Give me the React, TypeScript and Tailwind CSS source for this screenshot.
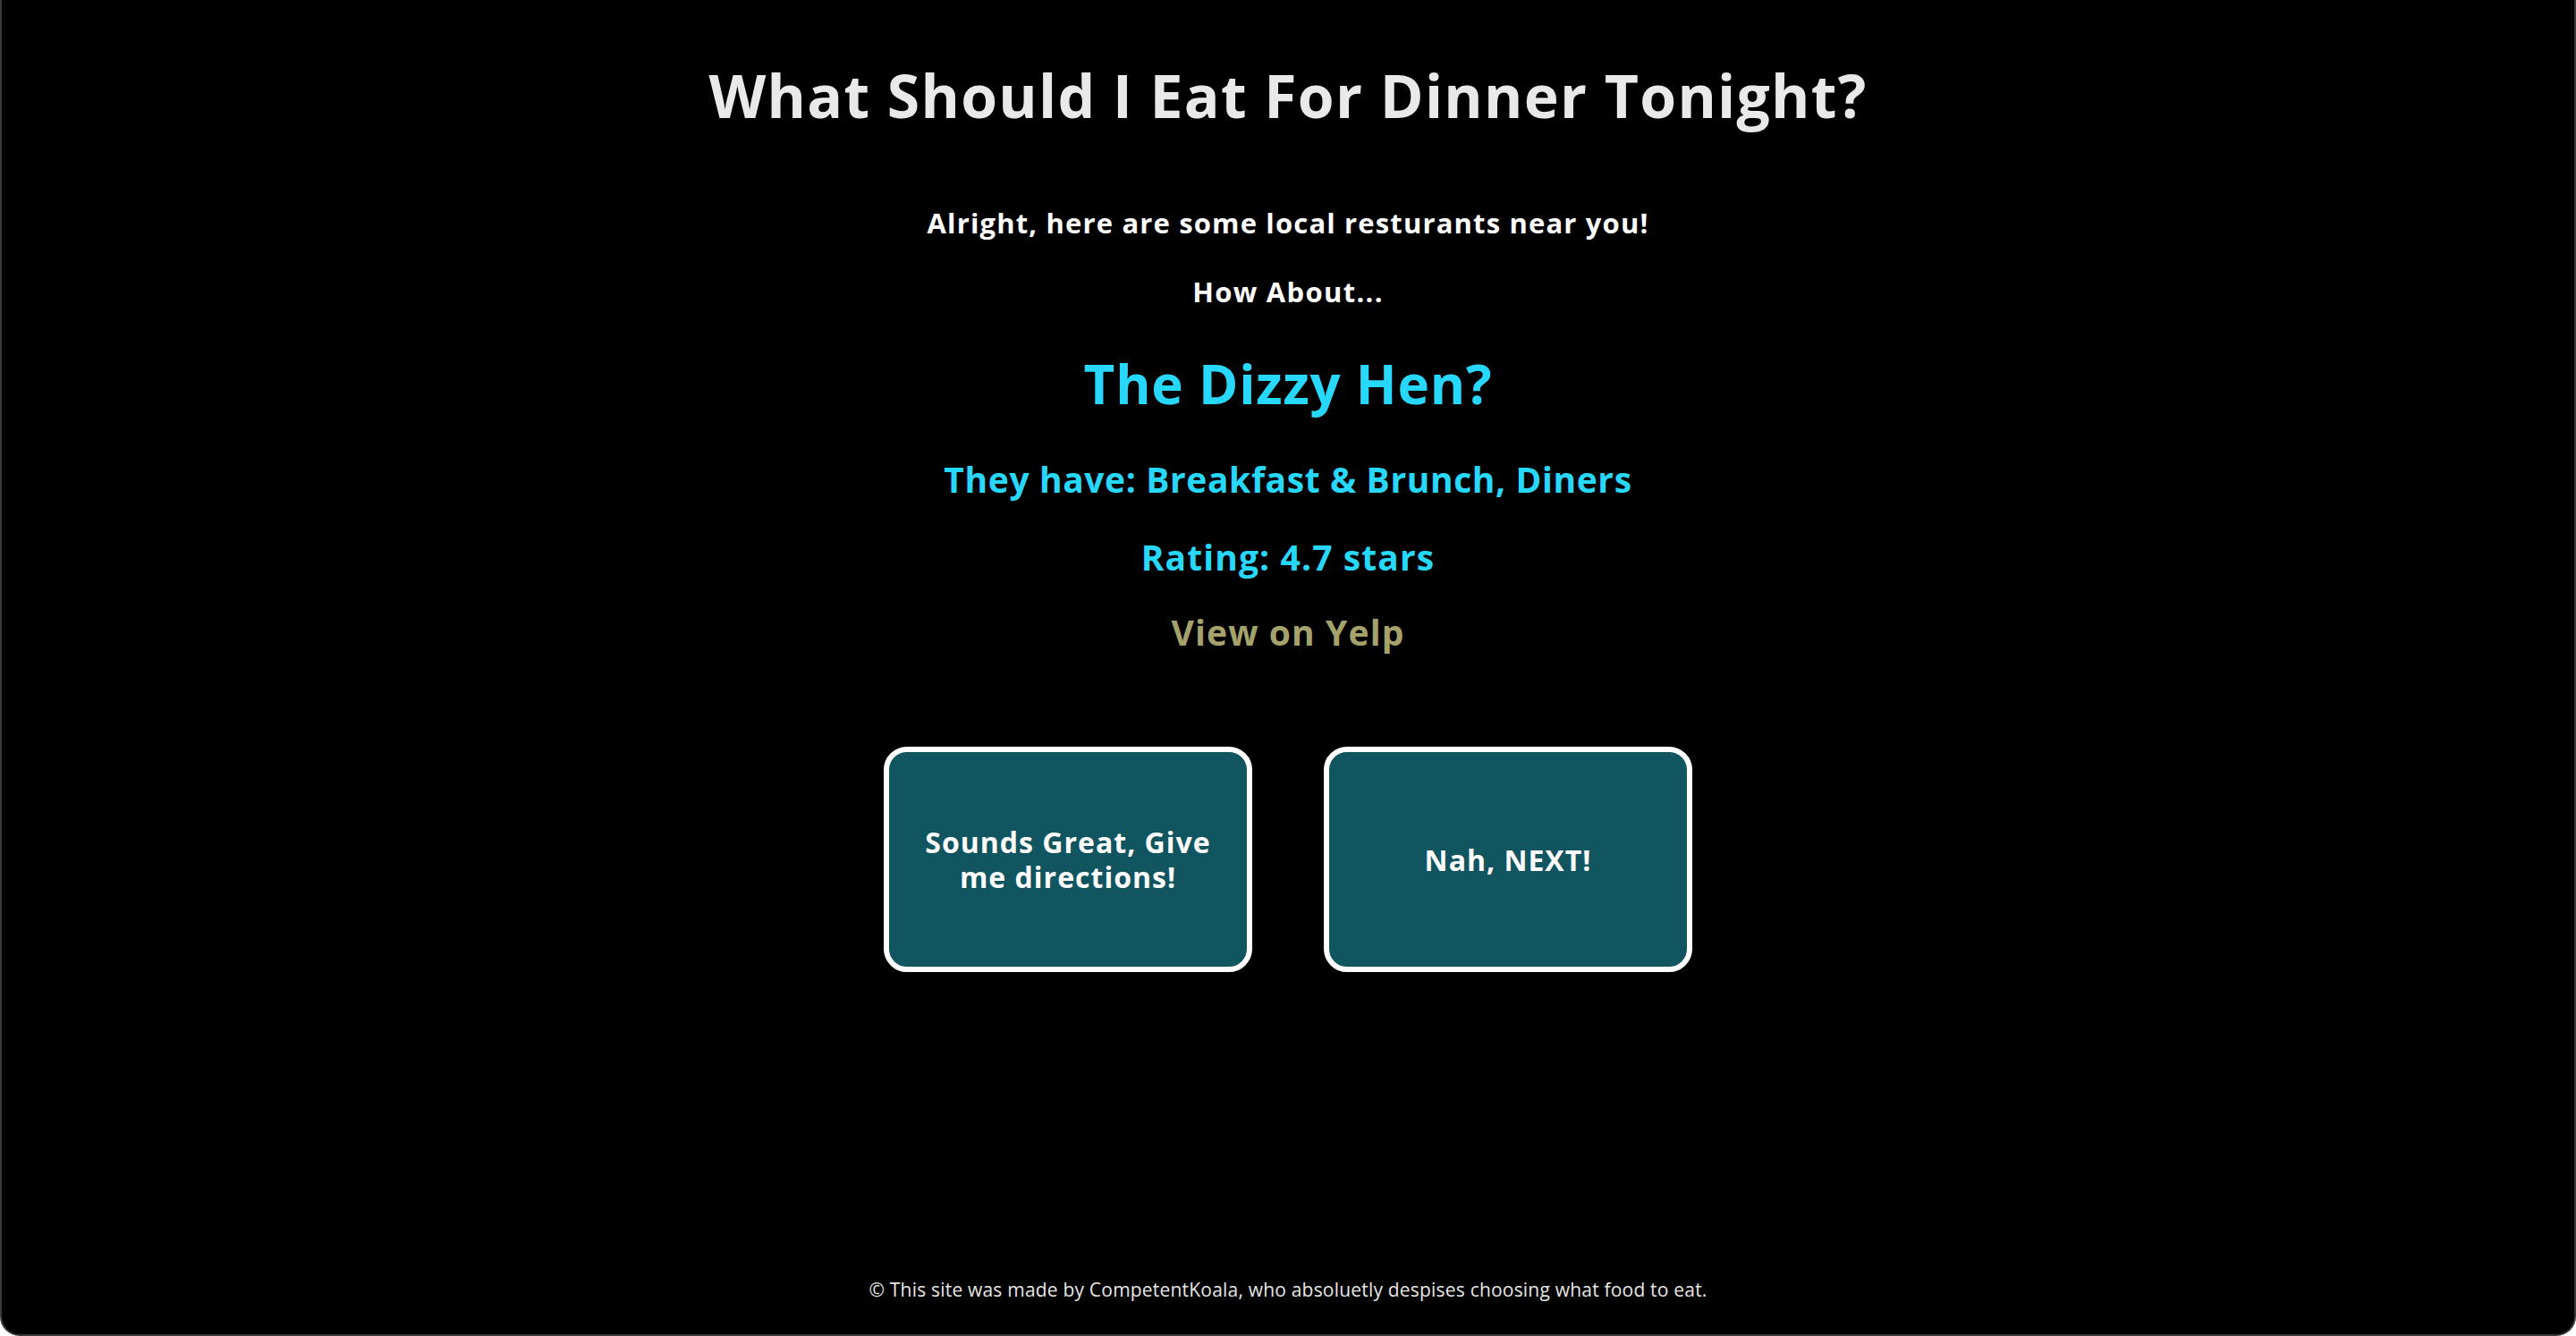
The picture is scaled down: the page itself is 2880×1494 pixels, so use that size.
import React from "react";

export default function App() {
  return (
    <div className="h-[1494px] w-full bg-black border-x-2 border-b-2 border-[#3a3a3a] rounded-b-[22px] flex flex-col items-center text-center font-['Open_Sans',_'Noto_Sans',_sans-serif] overflow-hidden">
      <h1 className="mt-[70px] text-[66px] leading-[72px] font-bold tracking-[1.3px] text-[#e9e9e9]">
        What Should I Eat For Dinner Tonight?
      </h1>
      <p className="mt-[87px] text-[31px] leading-[40px] font-bold tracking-[1.15px] text-white">
        Alright, here are some local resturants near you!
      </p>
      <p className="mt-[37px] text-[31px] leading-[40px] font-bold tracking-[1.3px] text-white">How About...</p>
      <h2 className="mt-[51px] text-[60px] leading-[64px] font-bold tracking-[0.8px] text-[#28d8fc]">The Dizzy Hen?</h2>
      <p className="mt-[51px] text-[39px] leading-[48px] font-bold tracking-[0.6px] text-[#28d8fc]">
        They have: Breakfast &amp; Brunch, Diners
      </p>
      <p className="mt-[39px] text-[39px] leading-[48px] font-bold tracking-[1.1px] text-[#28d8fc]">Rating: 4.7 stars</p>
      <a className="mt-[36px] text-[39px] leading-[48px] font-bold tracking-[1.1px] text-[#a5a36b]">View on Yelp</a>
      <div className="mt-[104px] flex gap-[80px]">
        <button className="w-[412px] h-[252px] bg-[#115560] border-[6px] border-white rounded-[26px] flex items-center justify-center px-9 text-[32px] leading-[39px] font-bold tracking-[1px] text-white">
          Sounds Great, Give me directions!
        </button>
        <button className="w-[412px] h-[252px] bg-[#115560] border-[6px] border-white rounded-[26px] flex items-center justify-center px-9 text-[32px] leading-[39px] font-bold tracking-[1px] text-white">
          Nah, NEXT!
        </button>
      </div>
      <footer className="mt-auto mb-[35px] text-[21px] leading-[30px] tracking-[0.2px] text-[#e6e6e6]">
        © This site was made by CompetentKoala, who absoluetly despises choosing what food to eat.
      </footer>
    </div>
  );
}
